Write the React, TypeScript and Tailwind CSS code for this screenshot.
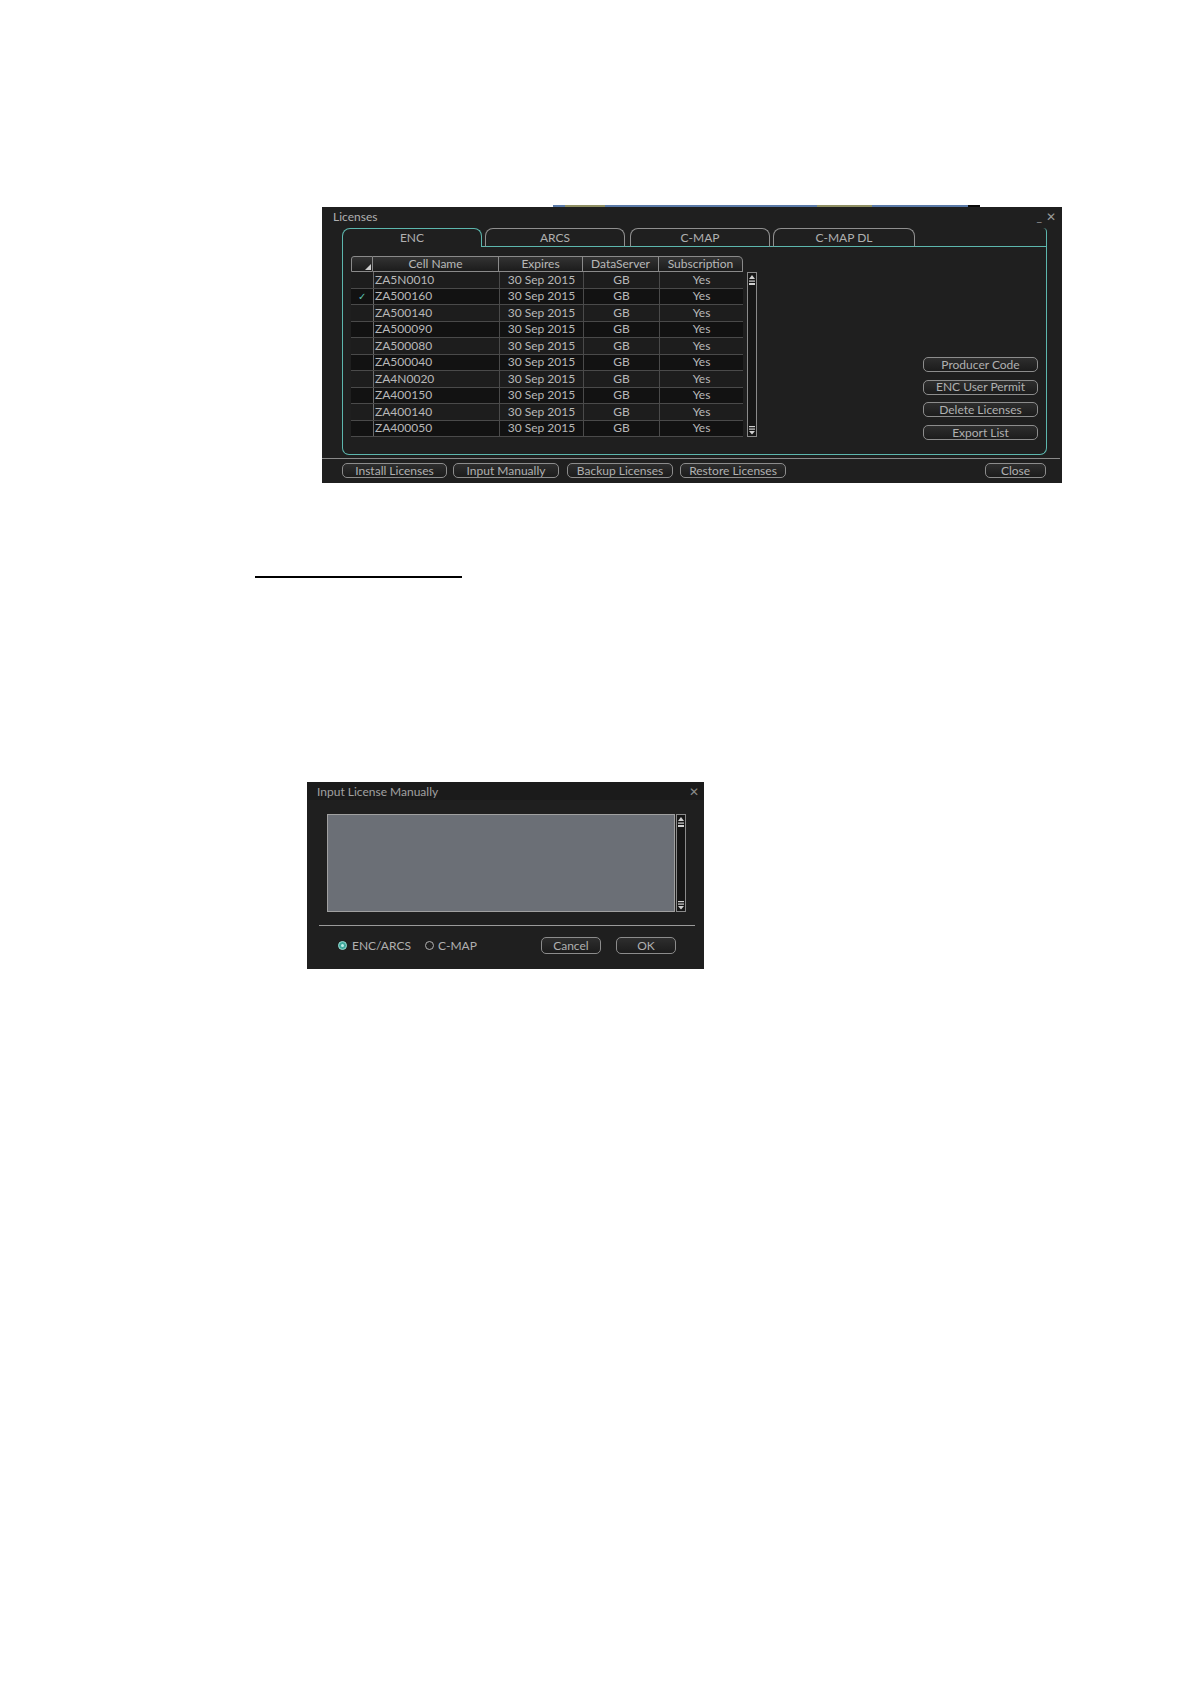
import React from "react";

const rows = [
  "ZA5N0010",
  "ZA500160",
  "ZA500140",
  "ZA500090",
  "ZA500080",
  "ZA500040",
  "ZA4N0020",
  "ZA400150",
  "ZA400140",
  "ZA400050",
];

const font = "font-['Lato','Open_Sans','Liberation_Sans',sans-serif]";

function Btn({ label, className }: { label: string; className: string }) {
  return (
    <div
      className={`flex items-center justify-center rounded-[5px] border border-[#8c8c8c] bg-gradient-to-b from-[#2e2e2e] to-[#1c1c1c] text-[12px] leading-none text-[#b0b0b0] ${className}`}
    >
      {label}
    </div>
  );
}

function ScrollBar({ h }: { h: string }) {
  return (
    <div className={`flex w-[10px] flex-col justify-between border border-[#8a8a8a] bg-[#161616] ${h}`}>
      <svg width="8" height="12" viewBox="0 0 8 12" className="mt-[1px]">
        <path d="M4 1 L7 5 L1 5 Z" fill="#d0d0d0" />
        <rect x="1" y="6.5" width="6" height="1.2" fill="#d0d0d0" />
        <rect x="1" y="9" width="6" height="2" fill="#d0d0d0" />
      </svg>
      <svg width="8" height="10" viewBox="0 0 8 10" className="mb-[1px]">
        <rect x="1" y="1" width="6" height="1.2" fill="#d0d0d0" />
        <rect x="1" y="3.5" width="6" height="1.2" fill="#d0d0d0" />
        <path d="M1 6 L7 6 L4 9.5 Z" fill="#d0d0d0" />
      </svg>
    </div>
  );
}

function Tab({ label, active, w }: { label: string; active?: boolean; w: string }) {
  return (
    <div
      className={`flex h-[19px] items-center justify-center rounded-t-[8px] text-[12px] leading-none text-[#b0b0b0] ${w} ${
        active
          ? "border-l border-r border-t border-[#5cb6ad]"
          : "border-l border-r border-t border-[#8f8f8f] border-b border-b-[#5cb6ad]"
      }`}
    >
      {label}
    </div>
  );
}

function Gap({ w }: { w: string }) {
  return <div className={`h-[19px] border-b border-[#5cb6ad] ${w}`} />;
}

function LicensesDialog() {
  return (
    <div>
      {/* strip of the screen behind */}
      <div className="ml-[231px] flex h-[2px] w-[427px]">
        <div className="w-[12px] bg-[#5a7aa8]" />
        <div className="w-[40px] bg-[#8f8f62]" />
        <div className="w-[212px] bg-[#5a7aa8]" />
        <div className="w-[55px] bg-[#8f8f62]" />
        <div className="w-[96px] bg-[#5a7aa8]" />
        <div className="w-[12px] bg-[#0a0a0a]" />
      </div>
      <div className="flex h-[276px] w-[740px] flex-col bg-[#1f1f1f]">
        {/* title bar */}
        <div className="flex h-[21px] items-start justify-between pl-[11px] pr-[6px] pt-[1px]">
          <span className="text-[12px] text-[#b0b0b0]">Licenses</span>
          <span className="flex items-center gap-[4px] text-[12px] leading-none text-[#9a9a9a]">
            <span className="mt-[3px]">_</span>
            <span className="mt-[3px]">✕</span>
          </span>
        </div>
        {/* tabs */}
        <div className="ml-[20px] flex w-[705px]">
          <Tab label="ENC" active w="w-[140px]" />
          <Gap w="w-[3px]" />
          <Tab label="ARCS" w="w-[140px]" />
          <Gap w="w-[5px]" />
          <Tab label="C-MAP" w="w-[140px]" />
          <Gap w="w-[3px]" />
          <Tab label="C-MAP DL" w="w-[142px]" />
          <div className="h-[19px] flex-1 rounded-tr-[4px] border-b border-r border-[#5cb6ad]" />
        </div>
        {/* panel */}
        <div className="ml-[20px] flex h-[208px] w-[705px] rounded-b-[7px] border-b border-l border-r border-[#5cb6ad] pl-[8px] pr-[8px] pt-[9px]">
          <div className="flex flex-col">
            {/* header */}
            <div className="flex h-[16px] text-[12px] leading-none text-[#b8b8b8]">
              <div className="relative w-[22px] rounded-tl-[3px] border border-[#8a8a8a] bg-gradient-to-b from-[#333] to-[#1c1c1c]">
                <div className="absolute bottom-[1px] right-[1px] h-0 w-0 border-b-[6px] border-l-[6px] border-b-[#cfcfcf] border-l-transparent" />
              </div>
              {[
                ["Cell Name", "w-[126px]"],
                ["Expires", "w-[84px]"],
                ["DataServer", "w-[76px]"],
                ["Subscription", "w-[84px] rounded-tr-[5px]"],
              ].map(([t, w]) => (
                <div
                  key={t}
                  className={`flex items-center justify-center border-b border-r border-t border-[#8a8a8a] bg-gradient-to-b from-[#333] to-[#1c1c1c] ${w}`}
                >
                  {t}
                </div>
              ))}
            </div>
            <div className="flex">
              <div className="flex flex-col">
                {rows.map((r, i) => (
                  <div
                    key={r}
                    className={`flex h-[16.5px] border-b border-[#4a4a4a] text-[12px] leading-none text-[#b8b8b8] ${
                      i % 2 === 0 ? "bg-[#1d1d1d]" : "bg-[#121212]"
                    }`}
                  >
                    <div className="flex w-[22px] items-center justify-center text-[10px] text-[#5cc0b4]">
                      {i === 1 ? "✓" : ""}
                    </div>
                    <div className="flex w-[126px] items-center border-l border-[#6a6a6a] pl-[1px]">{r}</div>
                    <div className="flex w-[84px] items-center justify-center border-l border-[#4a4a4a]">
                      30 Sep 2015
                    </div>
                    <div className="flex w-[76px] items-center justify-center border-l border-[#4a4a4a]">GB</div>
                    <div className="flex w-[84px] items-center justify-center border-l border-[#4a4a4a]">Yes</div>
                  </div>
                ))}
              </div>
              <div className="ml-[4px]">
                <ScrollBar h="h-[165px]" />
              </div>
            </div>
          </div>
          <div className="ml-auto flex flex-col gap-[7.7px] pt-[101px]">
            <Btn label="Producer Code" className="h-[15px] w-[115px]" />
            <Btn label="ENC User Permit" className="h-[15px] w-[115px]" />
            <Btn label="Delete Licenses" className="h-[15px] w-[115px]" />
            <Btn label="Export List" className="h-[15px] w-[115px]" />
          </div>
        </div>
        {/* bottom bar */}
        <div className="mt-[3px] h-px w-[738px] bg-[#8a8a8a]" />
        <div className="ml-[20px] mt-[4px] flex w-[704px]">
          <Btn label="Install Licenses" className="h-[15px] w-[105px]" />
          <Btn label="Input Manually" className="ml-[6px] h-[15px] w-[106px]" />
          <Btn label="Backup Licenses" className="ml-[8px] h-[15px] w-[106px]" />
          <Btn label="Restore Licenses" className="ml-[7px] h-[15px] w-[106px]" />
          <Btn label="Close" className="ml-auto h-[15px] w-[61px]" />
        </div>
      </div>
    </div>
  );
}

function InputDialog() {
  return (
    <div className="flex h-[187px] w-[397px] flex-col bg-[#1f1f1f]">
      <div className="flex h-[18px] items-center justify-between bg-[#1b1b1b] pl-[10px] pr-[5px] pt-[1px]">
        <span className="text-[12px] text-[#a0a0a0]">Input License Manually</span>
        <span className="text-[12px] leading-none text-[#8a8a8a]">✕</span>
      </div>
      <div className="ml-[20px] mt-[14px] flex">
        <div className="h-[98px] w-[348px] border border-[#a0a0a0] bg-[#6b6f76]" />
        <div className="ml-[1px]">
          <ScrollBar h="h-[98px]" />
        </div>
      </div>
      <div className="ml-[12px] mt-[13px] h-px w-[376px] bg-[#9a9a9a]" />
      <div className="ml-[31px] mt-[11px] flex h-[17px] items-center text-[12px] leading-none text-[#b0b0b0]">
        <div className="flex h-[9px] w-[9px] items-center justify-center rounded-full border border-[#9adad2] bg-[#3fa89c]">
          <div className="h-[3px] w-[3px] rounded-full bg-[#bdeee8]" />
        </div>
        <span className="ml-[5px]">ENC/ARCS</span>
        <div className="ml-[14px] h-[9px] w-[9px] rounded-full border border-[#b0b0b0]" />
        <span className="ml-[4px]">C-MAP</span>
        <Btn label="Cancel" className="ml-[64px] h-[17px] w-[60px]" />
        <Btn label="OK" className="ml-[15px] h-[17px] w-[60px]" />
      </div>
    </div>
  );
}

export default function App() {
  return (
    <div className={`min-h-[1684px] w-[1190px] bg-white ${font}`}>
      <div className="pl-[322px] pt-[205px]">
        <LicensesDialog />
      </div>
      <div className="ml-[255px] mt-[93px] h-[2px] w-[207px] bg-black" />
      <div className="ml-[307px] mt-[204px]">
        <InputDialog />
      </div>
    </div>
  );
}
